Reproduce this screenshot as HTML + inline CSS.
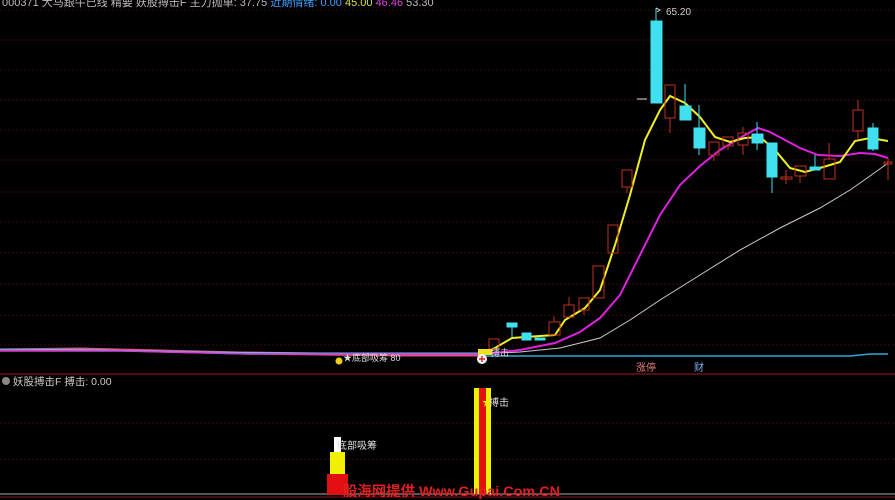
<!DOCTYPE html>
<html><head><meta charset="utf-8"><style>
html,body{margin:0;padding:0;background:#000;width:895px;height:500px;overflow:hidden}
svg{display:block}
text{font-family:"Liberation Sans","Noto Sans CJK SC",sans-serif}
</style></head><body>
<svg width="895" height="500" viewBox="0 0 895 500" xmlns="http://www.w3.org/2000/svg">
<rect width="895" height="500" fill="#000"/>
<g stroke="#3a0a0a" stroke-width="1" stroke-dasharray="2,2">
<line x1="0" y1="10" x2="895" y2="10"/>
<line x1="0" y1="40" x2="895" y2="40"/>
<line x1="0" y1="70" x2="895" y2="70"/>
<line x1="0" y1="100" x2="895" y2="100"/>
<line x1="0" y1="130" x2="895" y2="130"/>
<line x1="0" y1="160" x2="895" y2="160"/>
<line x1="0" y1="192" x2="895" y2="192"/>
<line x1="0" y1="222" x2="895" y2="222"/>
<line x1="0" y1="253" x2="895" y2="253"/>
<line x1="0" y1="284" x2="895" y2="284"/>
<line x1="0" y1="315" x2="895" y2="315"/>
<line x1="0" y1="345" x2="895" y2="345"/>
<line x1="0" y1="423" x2="895" y2="423"/>
<line x1="0" y1="459" x2="895" y2="459"/>
</g>
<line x1="0" y1="374" x2="895" y2="374" stroke="#8a1020" stroke-width="1.2"/>
<line x1="0" y1="494" x2="895" y2="494" stroke="#aaa" stroke-width="1"/>
<line x1="0" y1="497" x2="895" y2="497" stroke="#8a1020" stroke-width="1"/>
<text x="2" y="6" font-size="11" fill="#bbb">000371 大马跟牛已线 精要 妖股搏击F 主力抛单: 37.75 <tspan fill="#3aa0ff">近期情绪: 0.00</tspan> <tspan fill="#e0e040">45.00</tspan> <tspan fill="#e040e0">46.46</tspan> 53.30</text>
<polyline points="0,350 80,349 160,351 240,353 320,354 400,355 478,355" fill="none" stroke="#e05080" stroke-width="3"/>
<polyline points="0,349 100,350 200,352 300,353 478,353" fill="none" stroke="#60c0ff" stroke-width="1"/>
<polyline points="0,351 120,351 250,354 478,354" fill="none" stroke="#d040d0" stroke-width="1.5"/>
<polyline points="478,356 850,356 870,354 888,354" fill="none" stroke="#30a8d8" stroke-width="1.5"/>
<polyline points="478,354 520,352 560,348 600,338 630,320 660,300 700,275 740,250 780,228 820,208 850,190 870,176 888,163" fill="none" stroke="#ccc" stroke-width="1"/>
<polyline points="478,355 520,350 555,343 580,332 600,318 620,295 640,255 660,215 680,185 700,166 720,150 745,135 758,128 770,132 800,148 818,155 840,156 860,153 875,154 888,158" fill="none" stroke="#e020e0" stroke-width="2"/>
<polyline points="478,355 495,348 512,338 540,336 555,335 565,320 585,308 600,290 615,245 630,195 645,140 660,110 670,96 685,103 700,117 715,137 730,142 745,138 760,137 775,150 790,168 805,172 820,168 840,162 855,141 870,138 888,141" fill="none" stroke="#f0f020" stroke-width="2"/>
<g fill="none" stroke="#c03020" stroke-width="1">
<rect x="489" y="339" width="10" height="10"/>
<rect x="549" y="322" width="11" height="13"/><line x1="554" y1="316" x2="554" y2="322"/>
<rect x="564" y="305" width="10" height="12"/><line x1="569" y1="297" x2="569" y2="305"/>
<rect x="579" y="298" width="10" height="12"/><line x1="584" y1="310" x2="584" y2="315"/>
<rect x="593" y="266" width="11" height="32"/>
<rect x="608" y="225" width="10" height="28"/>
<rect x="622" y="170" width="10" height="17"/><line x1="627" y1="187" x2="627" y2="193"/>
<rect x="665" y="85" width="10" height="33"/><line x1="670" y1="118" x2="670" y2="133"/>
<rect x="709" y="142" width="10" height="13"/><line x1="714" y1="155" x2="714" y2="161"/>
<rect x="723" y="137" width="10" height="9"/><line x1="728" y1="146" x2="728" y2="150"/>
<rect x="738" y="133" width="10" height="12"/><line x1="743" y1="127" x2="743" y2="133"/><line x1="743" y1="145" x2="743" y2="155"/>
<rect x="781" y="177" width="11" height="2"/><line x1="786" y1="170" x2="786" y2="184"/>
<rect x="795" y="166" width="11" height="10"/><line x1="800" y1="176" x2="800" y2="183"/>
<rect x="824" y="159" width="11" height="20"/><line x1="829" y1="143" x2="829" y2="159"/>
<rect x="853" y="110" width="10" height="21"/><line x1="858" y1="100" x2="858" y2="110"/><line x1="858" y1="131" x2="858" y2="140"/>
<rect x="884" y="162" width="8" height="2"/><line x1="888" y1="158" x2="888" y2="180"/>
</g>
<g fill="#40e0f0" stroke="#40e0f0" stroke-width="1">
<rect x="507" y="323" width="10" height="4"/><line x1="512" y1="327" x2="512" y2="337"/>
<rect x="522" y="333" width="9" height="7"/>
<rect x="535" y="338" width="10" height="2"/>
<rect x="651" y="21" width="11" height="82"/><line x1="656" y1="8" x2="656" y2="21"/>
<rect x="680" y="106" width="11" height="14"/><line x1="685" y1="84" x2="685" y2="106"/>
<rect x="694" y="128" width="11" height="20"/><line x1="699" y1="105" x2="699" y2="155"/>
<rect x="752" y="134" width="11" height="9"/><line x1="757" y1="122" x2="757" y2="150"/>
<rect x="767" y="143" width="10" height="34"/><line x1="772" y1="177" x2="772" y2="193"/>
<rect x="810" y="167" width="10" height="3"/><line x1="815" y1="155" x2="815" y2="167"/>
<rect x="868" y="128" width="10" height="21"/><line x1="873" y1="123" x2="873" y2="151"/>
</g>
<line x1="637" y1="99" x2="647" y2="99" stroke="#ddd"/>
<polyline points="656,8 660,10 657,12" fill="none" stroke="#ccc"/>
<text x="666" y="15" font-size="10" fill="#ccc">65.20</text>
<rect x="478" y="349" width="14" height="6" fill="#f0e020"/>
<text x="491" y="356" font-size="9" fill="#ddd">搏击</text>
<circle cx="482" cy="359" r="5" fill="#fff"/>
<path d="M479 359h6M482 356v6" stroke="#e02020" stroke-width="1.5"/>
<circle cx="339" cy="361" r="3.5" fill="#f0d010"/>
<text x="343" y="361" font-size="9" fill="#ddd">★底部吸筹 80</text>
<text x="636" y="371" font-size="10" fill="#f08080">涨停</text>
<text x="694" y="371" font-size="10" fill="#80b0f0">财</text>
<circle cx="6" cy="381" r="4" fill="#888"/>
<text x="13" y="385" font-size="10.5" fill="#ccc">妖股搏击F  搏击: 0.00</text>
<rect x="474" y="388" width="17" height="106" fill="#f0f000"/>
<rect x="479" y="388" width="7" height="106" fill="#e01010"/>
<text x="482" y="406" font-size="10" fill="#f0f000">★</text><text x="489" y="406" font-size="10" fill="#ddd">搏击</text>
<rect x="327" y="474" width="21" height="21" fill="#e01010"/>
<rect x="330" y="452" width="15" height="22" fill="#f0f000"/>
<rect x="334" y="437" width="7" height="15" fill="#fff"/>
<text x="337" y="449" font-size="10" fill="#ddd">底部吸筹</text>
<text x="343" y="496" font-size="14" font-weight="bold" fill="#e02020" textLength="217" lengthAdjust="spacingAndGlyphs">股海网提供 Www.Gupai.Com.CN</text>
</svg>
</body></html>
